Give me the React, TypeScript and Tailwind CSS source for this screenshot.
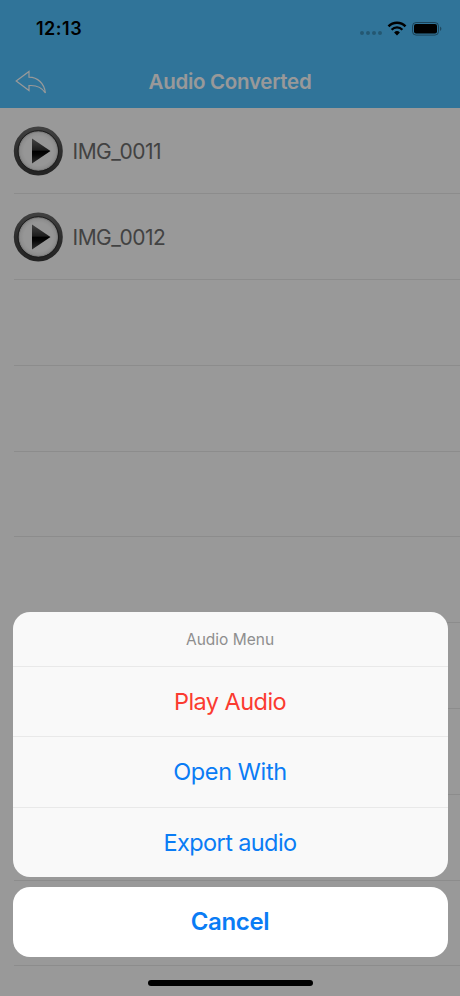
const files = ["IMG_0011", "IMG_0012"];

const emptyRows = 8;

const actions = [
  { label: "Play Audio", className: "text-[#fb3b30] tracking-[-0.55px]" },
  { label: "Open With", className: "text-[#0a7cf5] tracking-[-0.4px]" },
  { label: "Export audio", className: "text-[#0a7cf5] tracking-[-0.6px]" }
];

function WifiIcon() {
  return (
    <svg width="20" height="15" viewBox="0 0 20 15" fill="none" aria-hidden="true">
      <path d="M1.5 5.3a12 12 0 0 1 17 0" stroke="#000" strokeWidth="2.6" />
      <path d="M4.6 8.7a7.6 7.6 0 0 1 10.8 0" stroke="#000" strokeWidth="2.3" />
      <path d="M10 14.5 7.1 11.5a4.1 4.1 0 0 1 5.8 0Z" fill="#000" />
    </svg>
  );
}

function BatteryIcon() {
  return (
    <svg width="30" height="14" viewBox="0 0 30 14" fill="none" aria-hidden="true">
      <rect x="0.5" y="0.5" width="26" height="12.6" rx="3.6" stroke="#000" strokeOpacity="0.42" />
      <rect x="2" y="2" width="23" height="9.6" rx="2" fill="#000" />
      <path d="M28.2 4.6c1.6.7 1.6 3.7 0 4.4Z" fill="#000" fillOpacity="0.45" />
    </svg>
  );
}

function BackIcon() {
  return (
    <svg width="32" height="25" viewBox="0 0 32 25" fill="none" aria-hidden="true">
      <path
        d="M1.2 11 14 1.4v5.8c8.6.2 15.4 6 16.4 15.8-3.2-5-8.4-8-16.4-7.4v5Z"
        stroke="#fff"
        strokeWidth="1.2"
      />
    </svg>
  );
}

function PlayIcon({ id }: { id: string }) {
  return (
    <svg width="50" height="50" viewBox="-0.300 0 50 50" fill="none" aria-hidden="true">
      <defs>
        <linearGradient id={`ring-${id}`} x1="0" y1="0" x2="0" y2="1">
          <stop offset="0" stopColor="#6b6b6b" />
          <stop offset="0.5" stopColor="#4c4c4c" />
          <stop offset="1" stopColor="#3c3c3c" />
        </linearGradient>
        <radialGradient id={`face-${id}`}>
          <stop offset="0.7" stopColor="#fbfbfb" />
          <stop offset="0.88" stopColor="#ececec" />
          <stop offset="1" stopColor="#a8a8a8" />
        </radialGradient>
        <linearGradient id={`arrow-${id}`} x1="0" y1="0" x2="0" y2="1">
          <stop offset="0" stopColor="#727272" />
          <stop offset="0.47" stopColor="#303030" />
          <stop offset="0.5" stopColor="#000" />
          <stop offset="0.65" stopColor="#0c0c0c" />
          <stop offset="1" stopColor="#525252" />
        </linearGradient>
      </defs>
      <circle cx="25" cy="25" r="20.5" fill={`url(#face-${id})`} />
      <circle cx="25" cy="25" r="22.2" stroke={`url(#ring-${id})`} strokeWidth="4.6" />
      <circle cx="25" cy="25" r="20.3" stroke="#303030" />
      <path d="M18.7 12.5v25L37.2 25Z" fill={`url(#arrow-${id})`} />
    </svg>
  );
}

function Header() {
  return (
    <header className="h-[108px] shrink-0 bg-[#51c2ff]">
      <div className="flex h-[57px] items-center justify-between pr-[18px] pl-9">
        <span className="text-[18px] font-semibold tracking-[0.5px] text-black">12:13</span>
        <div className="flex items-center">
          <div className="mt-[9px] mr-[5px] flex gap-[2px]">
            {[0, 1, 2, 3].map((dot) => (
              <span key={dot} className="size-[4px] rounded-full bg-black/25" />
            ))}
          </div>
          <WifiIcon />
          <span className="ml-[5px]">
            <BatteryIcon />
          </span>
        </div>
      </div>
      <div className="grid h-[51px] grid-cols-[48px_1fr_48px] items-center">
        <button type="button" className="pl-[15px]" aria-label="Back">
          <BackIcon />
        </button>
        <h1 className="text-center text-[20.5px] font-semibold tracking-[-0.3px] text-white">Audio Converted</h1>
      </div>
    </header>
  );
}

function FileList() {
  return (
    <ul className="text-[21px] text-[#6f6f6f]">
      {files.map((name) => (
        <li key={name} className="flex h-[85.8px] items-center pl-[13px]">
          <PlayIcon id={name} />
          <div className="ml-[9.5px] pt-[2px] tracking-[-0.5px]">{name}</div>
        </li>
      ))}
    </ul>
  );
}

function Separators() {
  return (
    <div className="absolute inset-x-0 top-[108.4px]">
      {Array.from({ length: files.length + emptyRows }, (_, i) => (
        <div key={i} className="ml-[14px] h-[85.8px] border-b border-[#eaeaea]" />
      ))}
    </div>
  );
}

function ActionSheet() {
  return (
    <div className="absolute inset-0 flex flex-col justify-end bg-black/40 px-[12.5px] pb-[10px]">
      <div className="overflow-hidden rounded-[17px] bg-[#f9f9f9] text-center">
        <p className="flex h-[54px] items-center justify-center pt-[2px] text-[15.5px] text-[#8e8e8e]">Audio Menu</p>
        {actions.map((action) => (
          <button
            key={action.label}
            type="button"
            className={`block h-[70.3px] w-full border-t border-[#e9e9e9] text-[23.5px] ${action.className}`}
          >
            {action.label}
          </button>
        ))}
      </div>
      <button
        type="button"
        className="mt-[10px] h-[69.5px] shrink-0 rounded-[17px] bg-white pt-px text-[24px] font-semibold tracking-[-0.35px] text-[#0a7cf5]"
      >
        Cancel
      </button>
      <div className="mx-auto mt-[23.5px] h-[6px] w-[165px] shrink-0 rounded-full bg-black" />
    </div>
  );
}

export default function App() {
  return (
    <div className="relative flex h-[996px] w-[460px] flex-col overflow-hidden bg-white font-['Inter',sans-serif]">
      <Header />
      <FileList />
      <Separators />
      <ActionSheet />
    </div>
  );
}
